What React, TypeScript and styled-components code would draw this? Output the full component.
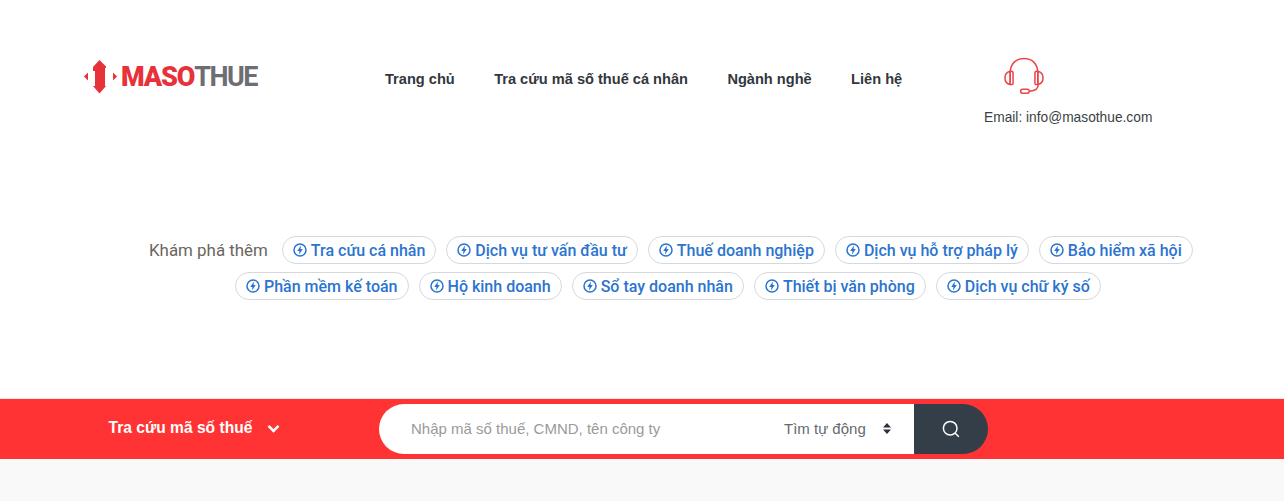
import React from "react";
import styled, { createGlobalStyle } from "styled-components";

const Global = createGlobalStyle`
  html, body { margin: 0; padding: 0; background: #fff; }
  body { font-family: "Liberation Sans", Arial, sans-serif; overflow: hidden; }
  * { box-sizing: border-box; }
`;
const Page = styled.div`
  width: 1284px;
  height: 501px;
  display: flex;
  flex-direction: column;
  overflow: hidden;
`;
const Header = styled.header`
  height: 236px;
  padding: 57px 0 0 84px;
  display: flex;
  align-items: flex-start;
`;
const Logo = styled.a`
  width: 301px;
  height: 40px;
  display: flex;
  align-items: center;
  gap: 3px;
  font-family: Roboto, sans-serif;
  font-size: 27px;
  font-weight: 900;
  letter-spacing: -1.15px;
  line-height: 40px;
`;
const Red = styled.span`
  color: #e8323a;
`;
const Gray = styled.span`
  color: #6d6e71;
  font-weight: 700;
  letter-spacing: -1.5px;
`;
const Nav = styled.nav`
  width: 599px;
  height: 44px;
  display: flex;
  align-items: center;
  gap: 39.4px;
`;
const NavLink = styled.a`
  font-size: 14.6px;
  font-weight: 700;
  color: #33373d;
  white-space: nowrap;
`;
const Contact = styled.div`
  display: flex;
  flex-direction: column;
  align-items: flex-start;
`;
const IconWrap = styled.div`
  padding-left: 20px;
  height: 42px;
  margin-bottom: 11px;
`;
const Email = styled.div`
  font-size: 13.75px;
  line-height: 16px;
  color: #3a3f45;
  white-space: nowrap;
`;
const Explore = styled.section`
  height: 163px;
  display: flex;
  flex-direction: column;
  gap: 8px;
`;
const Row = styled.div<{ $left: number }>`
  display: flex;
  align-items: center;
  gap: 10px;
  height: 28px;
  padding-left: ${(p) => p.$left}px;
`;
const Label = styled.span`
  font-family: Roboto, sans-serif;
  font-size: 16.9px;
  color: #6b6561;
  margin-right: 4px;
  white-space: nowrap;
`;
const Pill = styled.a`
  height: 28px;
  display: flex;
  align-items: center;
  gap: 4px;
  padding: 0 10px;
  border: 1px solid #d5d8dc;
  border-radius: 14px;
  font-family: Roboto, sans-serif;
  font-size: 16px;
  font-weight: 500;
  color: #2b74d0;
  white-space: nowrap;
`;
const Bar = styled.div`
  height: 60px;
  flex: none;
  background: #ff3333;
  box-shadow: 0 -1px 1px rgba(0, 0, 0, 0.08);
  display: flex;
  align-items: center;
  padding-left: 108.5px;
`;
const BarTitle = styled.div`
  width: 270.5px;
  display: flex;
  align-items: center;
  gap: 15px;
  margin-bottom: 2px;
  font-size: 15.6px;
  font-weight: 700;
  color: #fff;
`;
const ChevronSlot = styled.span`
  display: flex;
  margin-top: 1px;
`;
const SearchBox = styled.div`
  width: 609px;
  height: 50px;
  display: flex;
  align-items: stretch;
`;
const Field = styled.div`
  flex: 1;
  display: flex;
  align-items: center;
  background: #fff;
  border-radius: 25px 0 0 25px;
`;
const Query = styled.div`
  width: 405px;
  padding-left: 32px;
  margin-bottom: 2px;
  font-size: 15px;
  color: #9a9a9a;
  white-space: nowrap;
`;
const Mode = styled.div`
  width: 130px;
  display: flex;
  align-items: center;
  justify-content: space-between;
  padding-right: 23px;
  margin-bottom: 2px;
  font-size: 15px;
  color: #666a70;
  white-space: nowrap;
`;
const SearchButton = styled.button`
  width: 74px;
  height: 50px;
  border: 0;
  padding: 0;
  background: #333e48;
  border-radius: 0 25px 25px 0;
  display: flex;
  align-items: center;
  justify-content: center;
`;
const Foot = styled.div`
  flex: 1;
  background: #f9f9f9;
`;

const Bolt = () => (
  <svg width="14" height="14" viewBox="0 0 14 14" fill="none" aria-hidden>
    <circle cx="7" cy="7" r="6" stroke="#2b74d0" strokeWidth="1.5" />
    <path d="M7.9 2.6 4.2 7.9h2.2l-.4 3.5 3.8-5.3H7.6z" fill="#2b74d0" />
  </svg>
);

const Mark = () => (
  <svg width="34" height="34" viewBox="0 0 34 34" aria-hidden>
    <path
      fill="#e8323a"
      d="M0 16.5l4-4v8zM33 16.5l-4-4v8zM15.5 0L22 6.5V8h-1v18h1l-6.5 7.5L9 26h2V11H9V7z"
    />
  </svg>
);

const Headset = () => (
  <svg width="40" height="39" viewBox="0 0 42 40" fill="none" stroke="#ea474c" strokeWidth="1.6" aria-hidden>
    <path d="M6.5 15.5C7 6 13 1 21 1s14 5 14.5 14.5" />
    <path d="M6.5 14.5C2.5 15.5 1 18.5 1 21.5s1.5 6 5.5 7z" />
    <path d="M35.5 14.5c4 1 5.5 4 5.5 7s-1.5 6-5.5 7z" />
    <rect x="6.5" y="14.5" width="3" height="14" rx="1.5" />
    <rect x="32.5" y="14.5" width="3" height="14" rx="1.5" />
    <path d="M36 28.5c0 4-2.5 6.5-9 7" />
    <rect x="17.5" y="33.5" width="9" height="4" rx="2" />
  </svg>
);

const Chevron = () => (
  <svg width="13" height="9" viewBox="0 0 13 9" fill="none" stroke="#fff" strokeWidth="2.6" aria-hidden>
    <path d="M1.5 1.8l5 5 5-5" />
  </svg>
);

const Sort = () => (
  <svg width="8" height="11" viewBox="0 0 8 11" fill="#2b3138" aria-hidden>
    <path d="M4 0l4 4.4H0zM4 11L0 6.6h8z" />
  </svg>
);

const SearchIcon = () => (
  <svg width="18" height="18" viewBox="0 0 18 18" fill="none" stroke="#fff" strokeWidth="1.5" aria-hidden>
    <circle cx="8.2" cy="8.2" r="6.8" />
    <path d="M13.2 13.2l3.6 3.6" />
  </svg>
);

const rowOne = ["Tra cứu cá nhân", "Dịch vụ tư vấn đầu tư", "Thuế doanh nghiệp", "Dịch vụ hỗ trợ pháp lý", "Bảo hiểm xã hội"];
const rowTwo = ["Phần mềm kế toán", "Hộ kinh doanh", "Sổ tay doanh nhân", "Thiết bị văn phòng", "Dịch vụ chữ ký số"];
const links = ["Trang chủ", "Tra cứu mã số thuế cá nhân", "Ngành nghề", "Liên hệ"];

export default function App() {
  return (
    <Page>
      <Global />
      <Header>
        <Logo>
          <Mark />
          <span>
            <Red>MASO</Red>
            <Gray>THUE</Gray>
          </span>
        </Logo>
        <Nav>
          {links.map((l) => (
            <NavLink key={l}>{l}</NavLink>
          ))}
        </Nav>
        <Contact>
          <IconWrap>
            <Headset />
          </IconWrap>
          <Email>Email: info@masothue.com</Email>
        </Contact>
      </Header>
      <Explore>
        <Row $left={149}>
          <Label>Khám phá thêm</Label>
          {rowOne.map((t) => (
            <Pill key={t}>
              <Bolt />
              {t}
            </Pill>
          ))}
        </Row>
        <Row $left={235}>
          {rowTwo.map((t) => (
            <Pill key={t}>
              <Bolt />
              {t}
            </Pill>
          ))}
        </Row>
      </Explore>
      <Bar>
        <BarTitle>
          Tra cứu mã số thuế
          <ChevronSlot>
            <Chevron />
          </ChevronSlot>
        </BarTitle>
        <SearchBox>
          <Field>
            <Query>Nhập mã số thuế, CMND, tên công ty</Query>
            <Mode>
              Tìm tự động
              <Sort />
            </Mode>
          </Field>
          <SearchButton>
            <SearchIcon />
          </SearchButton>
        </SearchBox>
      </Bar>
      <Foot />
    </Page>
  );
}
